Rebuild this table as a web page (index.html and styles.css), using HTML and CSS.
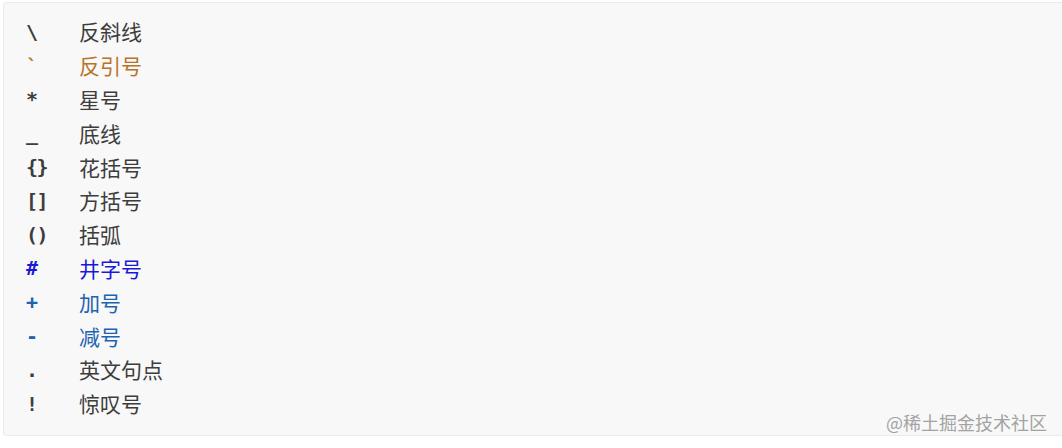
FILE: index.html
```html
<!DOCTYPE html>
<html lang="zh">
<head>
<meta charset="utf-8">
<link rel="stylesheet" href="styles.css">
</head>
<body>
<div class="box">
  <div class="list">
    <span class="sym">\</span><span class="txt">反斜线</span>
    <span class="sym orange">`</span><span class="txt orange">反引号</span>
    <span class="sym">*</span><span class="txt">星号</span>
    <span class="sym">_</span><span class="txt">底线</span>
    <span class="sym">{}</span><span class="txt">花括号</span>
    <span class="sym">[]</span><span class="txt">方括号</span>
    <span class="sym">()</span><span class="txt">括弧</span>
    <span class="sym blue">#</span><span class="txt blue">井字号</span>
    <span class="sym steel">+</span><span class="txt steel">加号</span>
    <span class="sym steel">-</span><span class="txt steel">减号</span>
    <span class="sym">.</span><span class="txt">英文句点</span>
    <span class="sym">!</span><span class="txt">惊叹号</span>
  </div>
  <div class="mark">@稀土掘金技术社区</div>
</div>
</body>
</html>
```
FILE: styles.css
```css
html, body {
  margin: 0;
  padding: 0;
  background: #ffffff;
}
.box {
  position: relative;
  margin: 2px 0 0 3px;
  height: 434px;
  background: #f8f8f8;
  border: 1px solid #ebebeb;
  border-right: none;
  border-radius: 4px 0 0 4px;
  box-sizing: border-box;
  padding: 12px 0 0 22px;
}
.list {
  display: grid;
  grid-template-columns: 53px auto;
  grid-auto-rows: 33.8px;
  align-items: center;
  color: #3d3d3d;
}
.sym {
  font-family: "DejaVu Sans Mono", "Liberation Mono", monospace;
  font-size: 20px;
  font-weight: 600;
  letter-spacing: -1.6px;
  line-height: 1;
}
.txt {
  font-family: "Noto Sans CJK SC", "Noto Sans", sans-serif;
  font-size: 21px;
  line-height: 1;
}
.orange { color: #b8732b; }
.blue { color: #1a1ad6; }
.steel { color: #1d63b0; }
.mark {
  position: absolute;
  right: 15px;
  bottom: 0;
  font-family: "Noto Sans CJK SC", sans-serif;
  font-size: 18px;
  color: #a3a3a3;
}
```
